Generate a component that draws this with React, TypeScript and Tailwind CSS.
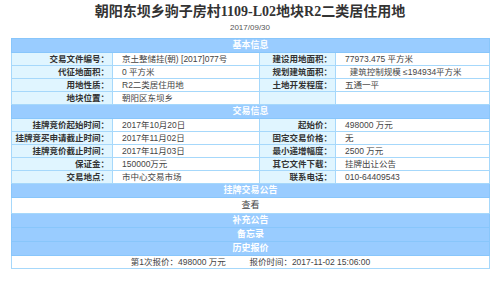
const cjk = `"Liberation Sans", "Noto Sans CJK SC", sans-serif`;

const basic: [string, string, string, string][] = [
  ["交易文件编号：", "京土整储挂(朝) [2017]077号", "建设用地面积：", "77973.475 平方米"],
  ["代征地面积：", "0 平方米", "规划建筑面积：", "  建筑控制规模 ≤194934平方米"],
  ["用地性质：", "R2二类居住用地", "土地开发程度：", "五通一平"],
  ["地块位置：", "朝阳区东坝乡", "", ""],
];

const trade: [string, string, string, string][] = [
  ["挂牌竞价起始时间：", "2017年10月20日", "起始价：", "498000 万元"],
  ["挂牌竞买申请截止时间：", "2017年11月02日", "固定交易价格：", "无"],
  ["挂牌竞价截止时间：", "2017年11月03日", "最小递增幅度：", "2500 万元"],
  ["保证金：", "150000万元", "其它文件下载：", "挂牌出让公告"],
  ["交易地点：", "市中心交易市场", "联系电话：", "010-64409543"],
];

function Head({ title }: { title: string }) {
  return (
    <tr>
      <td
        colSpan={4}
        className="h-[14px] bg-[#99ccff] border border-[#88c6fb] text-center text-white font-bold text-[9px] leading-none p-0"
      >
        {title}
      </td>
    </tr>
  );
}

function Row({ cells, h }: { cells: [string, string, string, string]; h: string }) {
  const label = `${h} bg-[#e0f5ff] border border-[#a6d8fb] text-right font-bold text-[8.5px] leading-none text-[#333] pr-[3px] p-0 whitespace-nowrap`;
  const value = `${h} bg-white border border-[#a6d8fb] text-left text-[8.5px] leading-none text-[#444] pl-[9px] p-0 whitespace-pre`;
  return (
    <tr>
      <td className={label}>{cells[0]}</td>
      <td className={value}>{cells[1]}</td>
      <td className={label}>{cells[2]}</td>
      <td className={value}>{cells[3]}</td>
    </tr>
  );
}

export default function App() {
  return (
    <div className="w-[500px] h-[281px] bg-white overflow-hidden" style={{ fontFamily: cjk }}>
      <h1
        className="pt-[4px] text-center text-[14px] leading-[16px] font-bold text-[#333]"
        style={{ fontFamily: `"Liberation Serif", "Noto Sans CJK SC", serif` }}
      >
        朝阳东坝乡驹子房村1109-L02地块R2二类居住用地
      </h1>
      <div className="mt-[3px] text-center text-[8px] leading-[9px] text-[#555]">2017/09/30</div>
      <table className="ml-[11px] mt-[6px] w-[478px] table-fixed border-collapse border border-[#b3e0ff]">
        <colgroup>
          <col className="w-[101px]" />
          <col className="w-[147px]" />
          <col className="w-[76px]" />
          <col className="w-[154px]" />
        </colgroup>
        <tbody>
          <Head title="基本信息" />
          {basic.map((r, i) => (
            <Row key={i} cells={r} h="h-[13px]" />
          ))}
          <Head title="交易信息" />
          {trade.map((r, i) => (
            <Row key={i} cells={r} h="h-[13px]" />
          ))}
          <Head title="挂牌交易公告" />
          <tr>
            <td colSpan={4} className="h-[16px] bg-white border border-[#a6d8fb] text-center text-[9px] leading-none text-[#444] p-0">
              查看
            </td>
          </tr>
          <Head title="补充公告" />
          <Head title="备忘录" />
          <Head title="历史报价" />
          <tr>
            <td colSpan={4} className="h-[13px] bg-white border border-[#a6d8fb] text-center text-[8.5px] leading-none text-[#444] p-0 whitespace-pre">
              {"第1次报价：498000 万元          报价时间：2017-11-02 15:06:00"}
            </td>
          </tr>
        </tbody>
      </table>
    </div>
  );
}
